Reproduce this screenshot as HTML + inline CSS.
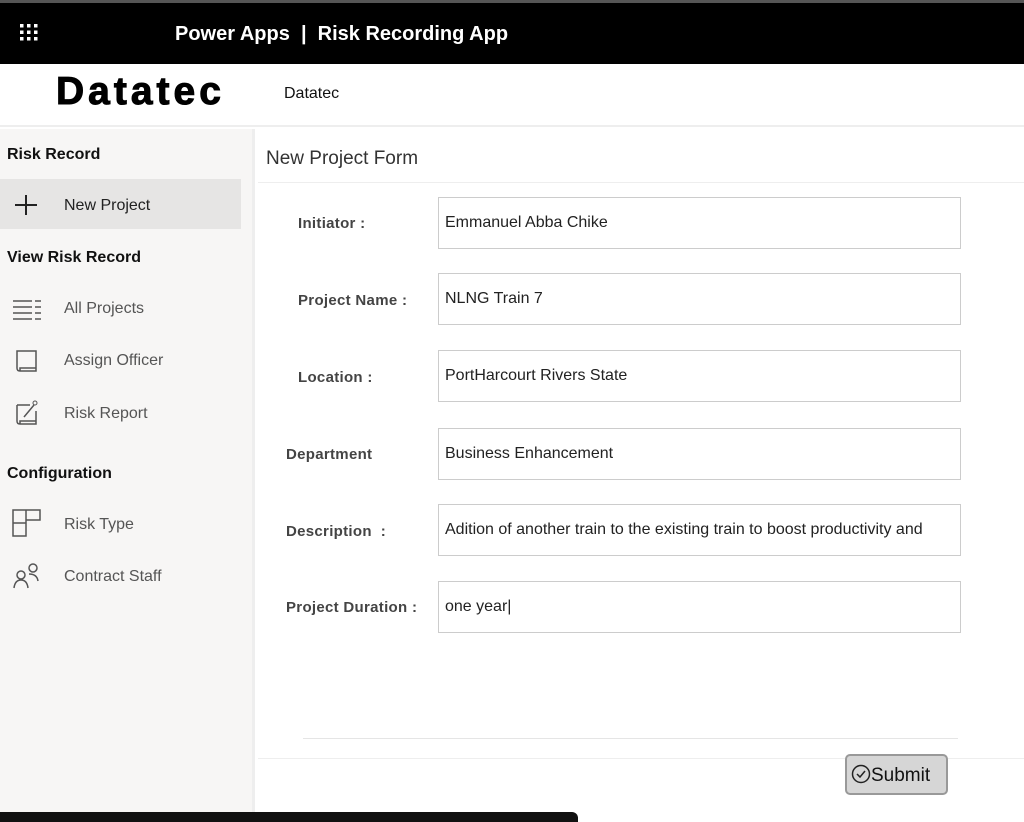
<!DOCTYPE html>
<html><head><style>
*{margin:0;padding:0;box-sizing:border-box}
body{width:1024px;height:818px;overflow:hidden;background:#fff;font-family:"Liberation Sans",sans-serif;position:relative;color:#222}
.top{position:absolute;left:0;top:0;width:1024px;height:64px;background:#000;border-top:3px solid #555}
.top .t{position:absolute;left:175px;top:20px;color:#fff;font-size:20px;font-weight:bold}
.hdr{position:absolute;top:64px;left:0;width:1024px;height:63px;background:#fff;border-bottom:2px solid #eee}
.logo{position:absolute;left:56px;top:6px;font-size:39px;font-weight:900;letter-spacing:4px;color:#000;-webkit-text-stroke:1px #000}
.sub{position:absolute;left:284px;top:21px;font-size:16px;color:#111}
.side{position:absolute;left:0;top:129px;width:255px;height:689px;background:#f7f6f5;border-right:3px solid #eee}
.sec{position:absolute;left:7px;font-size:16px;font-weight:bold;color:#111}
.item{position:absolute;left:64px;font-size:16px;color:#555}
.sel{position:absolute;left:0;top:50px;width:241px;height:50px;background:#e6e5e4}
.ic{position:absolute;left:12px}
.main{position:absolute;left:258px;top:129px;width:766px;height:689px;background:#fff}
.ttl{position:absolute;left:8px;top:19px;font-size:19px;color:#333}
.hl{position:absolute;left:0;top:53px;width:766px;height:1px;background:#eee}
.lbl{position:absolute;font-size:15px;color:#444;font-weight:bold;letter-spacing:.3px}
.in{position:absolute;left:438px;width:523px;height:52px;border:1px solid #ccc;font-size:16px;padding:16px 6px;color:#222;white-space:nowrap;overflow:hidden}
.btn{position:absolute;left:845px;top:754px;width:103px;height:41px;background:#d6d6d6;border:2px solid #999;border-radius:5px;font-size:19px;padding:8px 0 0 4px;color:#111}
</style></head><body>
<div class="top">
<svg style="position:absolute;left:20px;top:21px" width="20" height="18"><g fill="#fff"><rect x="0" y="0" width="3.5" height="3.5"/><rect x="7" y="0" width="3.5" height="3.5"/><rect x="14" y="0" width="3.5" height="3.5"/><rect x="0" y="6.5" width="3.5" height="3.5"/><rect x="7" y="6.5" width="3.5" height="3.5"/><rect x="14" y="6.5" width="3.5" height="3.5"/><rect x="0" y="13" width="3.5" height="3.5"/><rect x="7" y="13" width="3.5" height="3.5"/><rect x="14" y="13" width="3.5" height="3.5"/></g></svg>
<div class="t">Power Apps &nbsp;|&nbsp; Risk Recording App</div></div>
<div class="hdr"><div class="logo">Datatec</div><div class="sub">Datatec</div></div>
<div class="side">
<div class="sec" style="top:17px">Risk Record</div>
<div class="sel"></div>
<svg class="ic" style="top:65px" width="28" height="22"><path d="M14 1V21M3 11H25" stroke="#222" stroke-width="2"/></svg>
<div class="item" style="top:68px;color:#222">New Project</div>
<div class="sec" style="top:120px">View Risk Record</div>
<svg class="ic" style="top:170px" width="30" height="22"><path d="M1 2H20M1 8H20M1 14H20M1 20H20M23 2H29M23 8H29M23 14H29M23 20H29" stroke="#555" stroke-width="1.5"/></svg>
<div class="item" style="top:171px">All Projects</div>
<svg class="ic" style="top:220px" width="30" height="26"><path d="M5 2H24V22H8Q5 22 5 19Z M8 22V19H24" stroke="#555" stroke-width="1.5" fill="none"/></svg>
<div class="item" style="top:223px">Assign Officer</div>
<svg class="ic" style="top:270px" width="30" height="30"><path d="M5 6H18M24 12V25H8Q5 25 5 22V6M8 25V22H24M12 18L22 6" stroke="#555" stroke-width="1.5" fill="none"/><circle cx="23" cy="4" r="2" stroke="#555" fill="none"/></svg>
<div class="item" style="top:276px">Risk Report</div>
<div class="sec" style="top:336px">Configuration</div>
<svg class="ic" style="top:380px" width="30" height="28"><path d="M1 1H28V11H14V27H1Z M1 14H14M14 1V14" stroke="#555" stroke-width="1.5" fill="none"/></svg>
<div class="item" style="top:387px">Risk Type</div>
<svg class="ic" style="top:432px" width="30" height="28"><circle cx="9" cy="14" r="4" stroke="#555" fill="none" stroke-width="1.5"/><circle cx="21" cy="7" r="4" stroke="#555" fill="none" stroke-width="1.5"/><path d="M2 27Q3 19 9 19Q15 19 16 27M17 13Q25 13 26 20" stroke="#555" fill="none" stroke-width="1.5"/></svg>
<div class="item" style="top:439px">Contract Staff</div>
</div>
<div class="main"><div class="ttl">New Project Form</div><div class="hl"></div>
<div style="position:absolute;left:45px;top:609px;width:655px;height:1px;background:#e5e5e5"></div>
<div style="position:absolute;left:0;top:629px;width:766px;height:1px;background:#eee"></div>
</div>
<div class="lbl" style="left:298px;top:215px">Initiator :</div>
<div class="in" style="top:197px">Emmanuel Abba Chike</div>
<div class="lbl" style="left:298px;top:292px">Project Name :</div>
<div class="in" style="top:273px">NLNG Train 7</div>
<div class="lbl" style="left:298px;top:369px">Location :</div>
<div class="in" style="top:350px">PortHarcourt Rivers State</div>
<div class="lbl" style="left:286px;top:446px">Department</div>
<div class="in" style="top:428px">Business Enhancement</div>
<div class="lbl" style="left:286px;top:523px">Description &nbsp;:</div>
<div class="in" style="top:504px">Adition of another train to the existing train to boost productivity and</div>
<div class="lbl" style="left:286px;top:599px">Project Duration :</div>
<div class="in" style="top:581px">one year|</div>
<div class="btn"><svg width="20" height="20" style="vertical-align:-3px"><circle cx="10" cy="10" r="8.5" stroke="#222" stroke-width="1.5" fill="none"/><path d="M6 10L9 13L14 7" stroke="#222" stroke-width="1.5" fill="none"/></svg>Submit</div>
<div style="position:absolute;left:0;top:812px;width:578px;height:10px;background:#111;border-radius:0 6px 0 0"></div>
</body></html>
